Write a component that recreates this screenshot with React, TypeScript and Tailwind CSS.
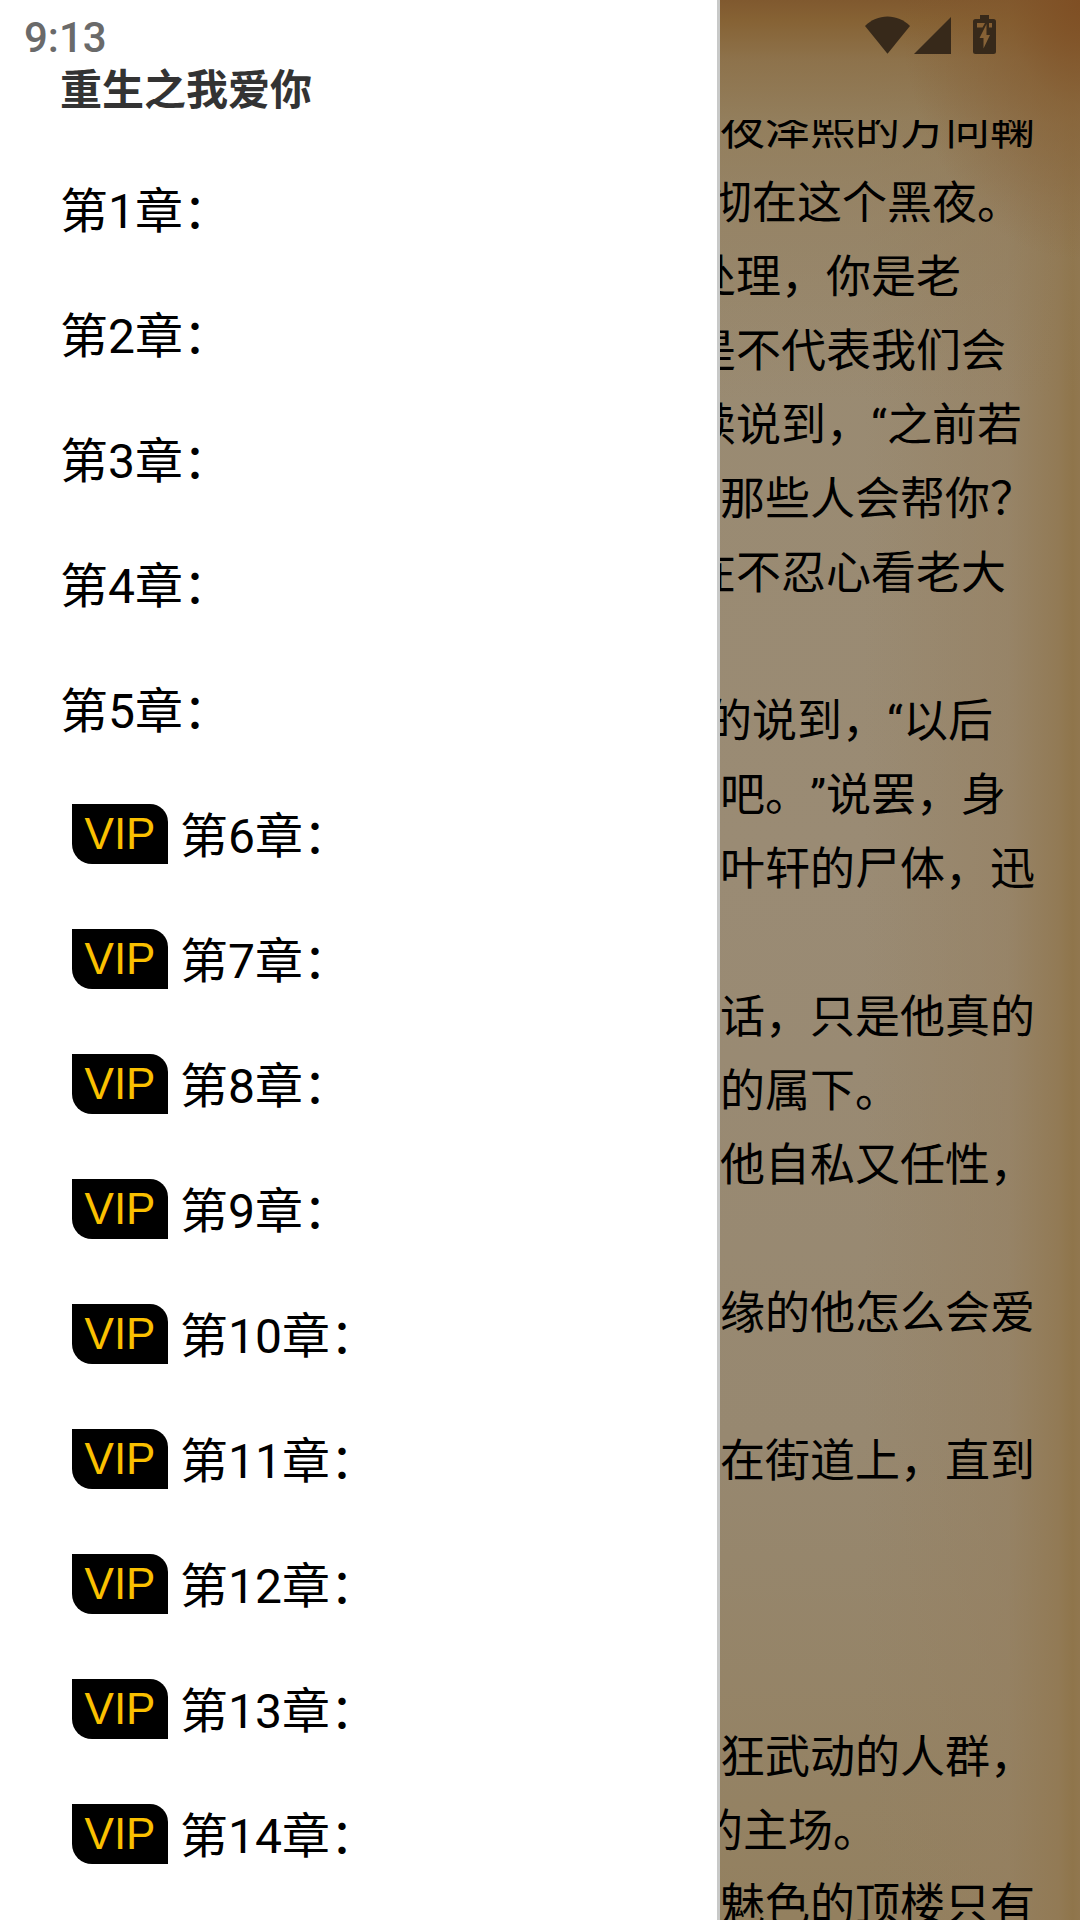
interface Chapter {
  id: number;
  vip: boolean;
}

type Lead = "none" | "oneQuote" | "twoQuotes" | "ellipsis";

interface ReaderLine {
  text: string;
  lead?: Lead;
}

const chapters: Chapter[] = Array.from({ length: 14 }, (_, i) => ({
  id: i + 1,
  vip: i >= 5,
}));

// Narrow punctuation earlier in a line pulls the rest of it off the 45px grid
const leads: Record<Lead, string> = {
  none: "",
  oneQuote: "-ml-[29px]",
  twoQuotes: "-ml-[13px]",
  ellipsis: "-ml-[22px]",
};

const lines: ReaderLine[] = [
  { text: "夜泽熙的方向鞠" },
  { text: "彻在这个黑夜。", lead: "twoQuotes" },
  { text: "处理，你是老", lead: "oneQuote" },
  { text: "是不代表我们会", lead: "oneQuote" },
  { text: "续说到，“之前若", lead: "oneQuote" },
  { text: "那些人会帮你？" },
  { text: "在不忍心看老大", lead: "oneQuote" },
  { text: "" },
  { text: "的说到，“以后", lead: "twoQuotes" },
  { text: "吧。”说罢，身" },
  { text: "叶轩的尸体，迅" },
  { text: "" },
  { text: "话，只是他真的" },
  { text: "的属下。" },
  { text: "他自私又任性，" },
  { text: "" },
  { text: "缘的他怎么会爱" },
  { text: "" },
  { text: "在街道上，直到" },
  { text: "" },
  { text: "" },
  { text: "" },
  { text: "狂武动的人群，" },
  { text: "的主场。", lead: "ellipsis" },
  { text: "魅色的顶楼只有" },
];

function StatusBar() {
  return (
    <header className="absolute inset-x-0 top-0 z-10 flex items-start justify-between pt-3 pr-[84px] pl-6">
      <time className="text-[42px] leading-[52px] font-medium text-[#6a6a6a]">9:13</time>
      <div className="flex items-end text-[#37291a]">
        <svg className="mr-1 h-[40px] w-[45px]" viewBox="0 0 45 40" fill="currentColor" aria-hidden="true">
          <path d="M0 12C6 6 14 2.500 22.500 2.500S39 6 45 12L22.500 39.800Z" />
        </svg>
        <svg className="mr-[22px] h-[40px] w-[37px]" viewBox="0 0 37 40" fill="currentColor" aria-hidden="true">
          <path d="M37 3v37H0Z" />
        </svg>
        <svg className="h-[42px] w-[23px]" viewBox="0 0 23 42" fill="currentColor" aria-hidden="true">
          <path
            fillRule="evenodd"
            d="M7 3h9v4h4.500Q23 7 23 9.500v30Q23 42 20.500 42h-18Q0 42 0 39.500v-30Q0 7 2.500 7H7ZM4 11v4.500h5.500L12 11ZM16 11v4.500h3V11ZM13.500 12L6.500 26h4v10.500L17 23h-3.500Z"
          />
        </svg>
      </div>
    </header>
  );
}

function VipBadge() {
  return (
    <span className="mx-3 mb-1.5 flex h-[60px] w-24 items-center justify-center rounded-tr-[18px] rounded-bl-[20px] bg-black font-['Liberation_Sans',sans-serif] text-[44px] leading-[60px] text-[#fac000]">
      VIP
    </span>
  );
}

function ChapterDrawer() {
  return (
    <nav className="w-2/3 shrink-0 overflow-hidden border-r-3 border-[#c8c9c8] bg-white pt-[61px] pl-[60px]">
      <h1 className="text-[42px] leading-[60px] font-bold text-[#333]">重生之我爱你</h1>
      <ul className="mt-7">
        {chapters.map((chapter) => (
          <li key={chapter.id}>
            <a href={`#chapter-${chapter.id}`} className="flex h-[125px] items-center text-5xl text-black">
              {chapter.vip && <VipBadge />}
              <span>第{chapter.id}章：</span>
            </a>
          </li>
        ))}
      </ul>
    </nav>
  );
}

function Reader() {
  return (
    <main className="flex min-w-0 flex-1 flex-col bg-[radial-gradient(ellipse_180px_260px_at_100%_0%,#7f4f24_0%,#83582c90_40%,#8a653800_100%),linear-gradient(to_bottom,#80592f_0px,#866234_20px,#8b6d43d0_60px,#8f7750a0_120px,#917a5670_200px,#96866600_400px),linear-gradient(to_right,#957f5f00_40%,#957f5f90_80%,#927a55_94%,#8f754b_98%,#91774f_100%),linear-gradient(to_bottom,#998a70_0%,#9a8b74_45%,#978870_75%,#93805f_100%)] pt-[120px]">
      <div className="min-h-0 flex-1 overflow-hidden text-[45px] leading-[74px] text-black [text-spacing-trim:space-all]">
        <div className="-mt-[27px]">
          {lines.map((line, i) => (
            <p key={i} className={`h-[74px] whitespace-nowrap ${leads[line.lead ?? "none"]}`}>
              {line.text}
            </p>
          ))}
        </div>
      </div>
    </main>
  );
}

export default function App() {
  return (
    <div
      lang="zh-CN"
      className="relative flex h-screen overflow-hidden font-['Roboto','Noto_Sans_CJK_SC',sans-serif]"
    >
      <StatusBar />
      <ChapterDrawer />
      <Reader />
    </div>
  );
}
